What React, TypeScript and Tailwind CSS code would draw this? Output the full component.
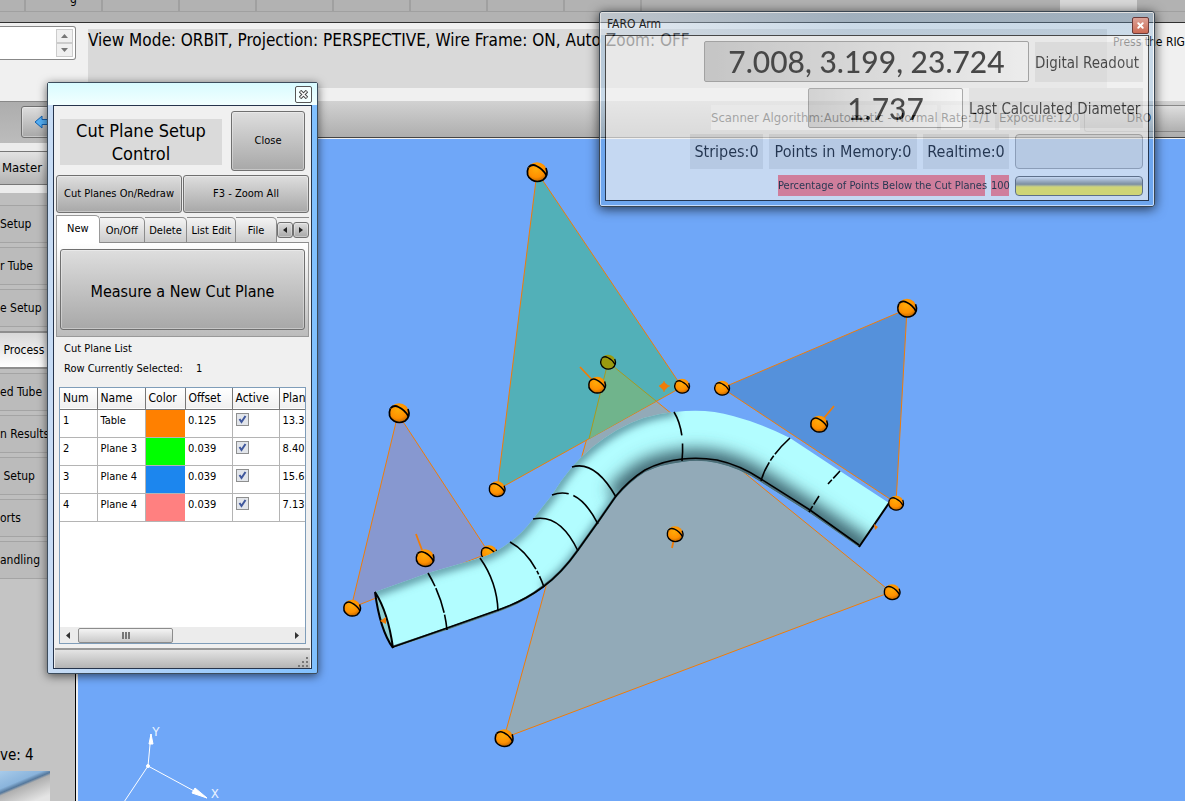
import React from 'react';
import { X } from 'lucide-react';

const BEVEL =
    'border border-[#707070] rounded-[3px] bg-gradient-to-b from-[#dedede] to-[#a8a8a8] shadow-[inset_0_0_0_1px_rgba(255,255,255,0.35)]';

const SIDE_ITEMS = ['Setup', 'r Tube', 'e Setup', ' Process', 'ed Tube', 'n Results', ' Setup', 'orts', 'andling'];

const PLANES = [
    { num: 1, name: 'Table', color: 'bg-[#ff8000]', offset: '0.125', plane: '13.3' },
    { num: 2, name: 'Plane 3', color: 'bg-[#00ff00]', offset: '0.039', plane: '8.40' },
    { num: 3, name: 'Plane 4', color: 'bg-[#1c86ee]', offset: '0.039', plane: '15.6' },
    { num: 4, name: 'Plane 4', color: 'bg-[#ff8080]', offset: '0.039', plane: '7.13' },
];

const TABS = [
    { label: 'On/Off', width: 'w-[45px]' },
    { label: 'Delete', width: 'w-[43px]' },
    { label: 'List Edit', width: 'w-[49px]' },
    { label: 'File', width: 'w-[41px]' },
];

const BALLS = [
    { x: 537, y: 172, r: 10 },
    { x: 399, y: 413, r: 10 },
    { x: 352, y: 608, r: 8.5 },
    { x: 425, y: 558, r: 9 },
    { x: 497, y: 489, r: 8 },
    { x: 597, y: 385, r: 8.5 },
    { x: 682, y: 386, r: 7.5 },
    { x: 722, y: 388, r: 7.5 },
    { x: 907, y: 308, r: 9.5 },
    { x: 819, y: 424, r: 8.5 },
    { x: 896, y: 503, r: 7.5 },
    { x: 892, y: 592, r: 8 },
    { x: 675, y: 534, r: 8 },
    { x: 504, y: 738, r: 9 },
];

const UPPER =
    'L428 573 L480 558 Q496 553 510 542 Q522 534 533 519 L552 495 Q561 480 572 467 Q590 446 617 430 Q645 414 675 412 Q706 408 733 416 Q763 424 790 438 L840 471 L889 503';
const LOWER =
    'L810 513 L761 482 Q740 468 717 463 Q699 459 682 462 Q662 464 645 472 Q629 482 616 498 L598 524 L578 552 Q562 575 543 588 Q524 603 498 612 L447 630 L393 648';

interface BallProps {
    x: number;
    y: number;
    r: number;
    fill?: string;
}

const Ball: React.FC<BallProps> = ({ x, y, r, fill = 'url(#ball)' }) => (
    <g transform={`translate(${x} ${y}) scale(${r / 10})`}>
        <ellipse rx="10" ry="9.8" fill={fill} />
        <path d="M-8.6 -4.6 Q-12 4 -5 8 Q0 11 6 8 Q12 3.5 9 -4" fill="none" stroke="#000" strokeWidth="1.7" />
        <path d="M-8.4 -4.8 Q-5 -8.4 -0.5 -6 Q6 -3 9.4 3.4" fill="none" stroke="#000" strokeWidth="1.8" />
    </g>
);

const Scene: React.FC = () => (
    <svg className="absolute inset-0 w-full h-full" viewBox="78 139 1107 662" preserveAspectRatio="xMinYMin slice">
        <defs>
            <radialGradient id="ball" cx="0.45" cy="0.35" r="0.7">
                <stop offset="0" stopColor="#ffab08" />
                <stop offset="0.6" stopColor="#ff9000" />
                <stop offset="1" stopColor="#b05c00" />
            </radialGradient>
            <clipPath id="tube">
                <path d={`M375 592 ${UPPER} L859 547 ${LOWER} Z`} />
            </clipPath>
            <filter id="soft" filterUnits="userSpaceOnUse" x="300" y="350" width="700" height="360">
                <feGaussianBlur stdDeviation="8" />
            </filter>
            <filter id="softer" filterUnits="userSpaceOnUse" x="300" y="350" width="700" height="360">
                <feGaussianBlur stdDeviation="4" />
            </filter>
        </defs>

        {/* Cut planes */}
        <g strokeWidth="1" stroke="#f07c08">
            <path d="M608 362 L891 592 L504 738 Z" fill="#92aab8" />
            <path d="M537 172 L497 490 L682 387 Z" fill="#52b0b8" />
            <path d="M722 388 L907 309 L896 503 Z" fill="#5591db" />
            <path d="M398 414 L351 608 L489 553 Z" fill="#8798d0" />
        </g>
        <path d="M608 362 L656 401 L589 439 Z" fill="#70b48c" />
        <path d="M656 401 L608 362 L589 439" fill="none" stroke="#a89a20" />
        <Ball x={608} y={362} r={7.5} fill="#9a9a10" />
        <Ball x={489} y={553} r={8} />

        {/* Tube body */}
        <g clipPath="url(#tube)">
            <rect x="350" y="390" width="560" height="280" fill="#b2fdff" />
            <path
                d="M370 594 L428 573 L480 558 Q496 553 510 542 Q522 534 533 519 L552 495 Q561 480 572 467 Q590 446 617 430 Q645 414 675 411"
                fill="none"
                stroke="#4d8492"
                strokeWidth="8"
                filter="url(#softer)"
            />
            <path
                d="M870 553 L810 513 L761 482 Q740 468 717 463 Q699 459 682 462 Q662 464 645 472 Q629 482 616 498"
                fill="none"
                stroke="#3c6570"
                strokeWidth="24"
                filter="url(#soft)"
            />
            <path d="M616 498 L598 524 L578 552 Q562 575 543 588" fill="none" stroke="#5d98a4" strokeWidth="8" filter="url(#softer)" />
            <path d={`M859 547 ${LOWER}`} fill="none" stroke="#4c6c76" strokeWidth="5" />
        </g>
        <g fill="none" stroke="#000" strokeWidth="1.6">
            <path d="M859 545 L810 510 L761 479 Q740 465 717 460 Q699 457 682 459 Q662 461 645 470 Q629 480 616 496 L598 522 L578 550 Q562 573 543 587 Q524 601 498 610 L447 628 L393 647" />
            <path d="M889 503 L859 547" strokeWidth="2" />
            <path d="M375 592 Q388 612 393 648 Q380 630 375 592 Z" fill="#8fd0d4" strokeWidth="2" />
            <path d="M428 573 Q444 600 447 630" strokeDasharray="15 2 26 2 40" />
            <path d="M480 558 Q497 582 498 611" />
            <path d="M510 542 Q532 554 544 587" strokeDasharray="38 2 4 2 40" />
            <path d="M533 519 Q560 513 578 551" />
            <path d="M552 495 Q578 485 598 524" strokeDasharray="17 5 60" />
            <path d="M572 467 Q595 460 616 497" />
            <path d="M674 412 Q685 430 682 461" strokeDasharray="25 8 40" />
            <path d="M790 438 Q767 459 761 481" strokeDasharray="22 2 6 2 30" />
            <path d="M840 471 L828 484 M819 496 L809 512" strokeDasharray="10 2" />
        </g>

        {/* Probe direction handles */}
        <path d="M416 534 L425 558 M580 367 L597 385 M834 406 L819 424 M672 548 L675 534" stroke="#f07c08" strokeWidth="1.8" />
        <path d="M664 382 L669 386 L664 391 L659 386 Z" fill="#f07c08" />
        <path d="M659 386 H670 M664 381 V392" stroke="#f07c08" />
        <path d="M380 621 L386 617 V624 Z M874 524 L878 527 L875 530 Z" fill="#f07c08" />
        {BALLS.map((ball) => (
            <Ball key={`${ball.x}-${ball.y}`} {...ball} />
        ))}

        {/* Axis triad */}
        <g stroke="#fff" fill="#fff">
            <path d="M148 766 L151 734 M148 766 L207 798 M148 766 L120 808" fill="none" />
            <path d="M151 734 L149 744 L153 744 Z M207 798 L192 793 L195 788 Z" />
            <circle cx="148" cy="766" r="1.5" />
        </g>
        <g fill="#e8f2ff" fontFamily="Liberation Mono, monospace" fontSize="13">
            <text x="152" y="736">Y</text>
            <text x="211" y="798">X</text>
        </g>
    </svg>
);

const Sidebar: React.FC = () => (
    <aside className="w-[78px] shrink-0 flex flex-col overflow-hidden bg-[#c4c4c4] border-r-2 border-[#f0f0f0]">
        <div className="flex-1 flex flex-col border-r border-black">
            <div className="h-[42px] border-t border-[#888] bg-gradient-to-b from-[#adadad] to-[#bcbcbc] pl-[21px] pt-1">
                <button className={`${BEVEL} w-[60px] h-[32px] pl-3 flex items-center`} aria-label="Back">
                    <svg width="16" height="14" viewBox="0 0 16 14">
                        <path d="M1 7 L8 1 V4.5 H16 V9.5 H8 V13 Z" fill="#55b0f5" stroke="#1260b0" />
                    </svg>
                </button>
            </div>
            <div className="py-2 bg-[#ececec]">
                <button className="block w-full h-[34px] pl-[2px] text-left text-[13px] border-y border-[#777] bg-gradient-to-b from-[#e2e2e2] to-[#b4b4b4]">
                    Master
                </button>
            </div>
            <nav className="flex flex-col gap-[4px] pt-[12px] bg-[#bebebe]">
                {SIDE_ITEMS.map((item, i) => (
                    <button
                        key={i}
                        className={
                            item === ' Process'
                                ? 'h-[38px] text-left text-[12px] whitespace-pre border-y-2 border-[#8e8e8e] bg-gradient-to-b from-[#d8d8d8] to-white'
                                : 'h-[38px] text-left text-[12px] whitespace-pre border-y border-[#a4a4a4] bg-[#bbbbbb]'
                        }
                    >
                        {item}
                    </button>
                ))}
            </nav>
            <div className="mt-auto">
                <p className="text-[15px] leading-[24px]">ve: 4</p>
                <svg className="block mt-1" width="50" height="30" viewBox="0 0 50 30">
                    <defs>
                        <linearGradient id="thumb" x1="0" y1="0" x2="0.7" y2="1">
                            <stop offset="0" stopColor="#a8cbea" />
                            <stop offset="0.4" stopColor="#8ab4dc" />
                            <stop offset="0.5" stopColor="#55789c" />
                            <stop offset="0.56" stopColor="#b0b0b0" />
                            <stop offset="1" stopColor="#e4e4e4" />
                        </linearGradient>
                    </defs>
                    <rect width="50" height="30" fill="url(#thumb)" />
                </svg>
            </div>
        </div>
    </aside>
);

const CutPlaneDialog: React.FC = () => (
    <section className="absolute left-[47px] top-[82px] w-[271px] border border-[#3c4c5c] rounded-[2px] bg-gradient-to-r from-[#c8dcf4] to-[#80c0ff] shadow-[0_2px_10px_rgba(0,0,0,0.6)]">
        <div className="h-[22px] pr-[5px] flex items-center justify-end bg-gradient-to-b from-[#d8fbff] to-[#f2ffff]">
            <button
                aria-label="Close window"
                className="w-[17px] h-[17px] flex items-center justify-center rounded-[2px] border border-[#555] bg-[#f4ffff]"
            >
                <svg width="9" height="9" viewBox="0 0 9 9">
                    <path d="M1 1 L8 8 M8 1 L1 8" stroke="#444" strokeWidth="3.4" />
                    <path d="M1.5 1.5 L7.5 7.5 M7.5 1.5 L1.5 7.5" stroke="#fff" strokeWidth="1.5" />
                </svg>
            </button>
        </div>
        <div className="mx-[5px] mb-[4px] border border-[#26344c] bg-[#f0f0f0] text-[11px]">
            <div className="flex justify-between pl-[6px] pr-[6px] pt-[5px]">
                <h1 className="w-[162px] h-[46px] mt-2 text-center text-[18px] leading-[23px] bg-[#dadada]">
                    Cut Plane Setup Control
                </h1>
                <button className={`${BEVEL} w-[74px] h-[60px]`}>Close</button>
            </div>
            <div className="flex gap-px px-[2px] pt-1">
                <button className={`${BEVEL} flex-1 h-[38px]`}>Cut Planes On/Redraw</button>
                <button className={`${BEVEL} flex-1 h-[38px]`}>F3 - Zoom All</button>
            </div>

            {/* Tab strip */}
            <div className="flex items-end px-[2px] pt-[2px] h-[30px]">
                <button className="w-[44px] h-[28px] bg-white border-l border-t border-r border-[#999] rounded-tr-[5px]">New</button>
                {TABS.map((tab) => (
                    <button
                        key={tab.label}
                        className={`${tab.width} h-[26px] pt-[2px] whitespace-nowrap border-t border-r border-b border-[#8c8c8c] rounded-tr-[5px] bg-gradient-to-b from-[#f4f4f4] to-[#cccccc]`}
                    >
                        {tab.label}
                    </button>
                ))}
                <div className="flex-1 h-[26px] flex items-center border-t border-b border-[#8c8c8c]">
                    <button aria-label="Previous tab" className={`${BEVEL} w-4 h-4 shrink-0 flex items-center justify-center`}>
                        <svg width="4" height="6" viewBox="0 0 4 6">
                            <path d="M4 0 L0 3 L4 6 Z" fill="#222" />
                        </svg>
                    </button>
                    <button aria-label="Next tab" className={`${BEVEL} w-4 h-4 shrink-0 flex items-center justify-center`}>
                        <svg width="4" height="6" viewBox="0 0 4 6">
                            <path d="M0 0 L4 3 L0 6 Z" fill="#222" />
                        </svg>
                    </button>
                </div>
            </div>
            <div className="mx-[2px] px-[3px] py-[6px] border-x border-b border-[#999] bg-gradient-to-b from-white to-[#bcbcbc]">
                <button className={`${BEVEL} block w-full h-[81px] pt-1 text-[16px]`}>Measure a New Cut Plane</button>
            </div>

            <p className="pl-[10px] mt-[2px] leading-[20px]">Cut Plane List</p>
            <p className="pl-[10px] leading-[20px]">
                Row Currently Selected: <span className="ml-[10px]">1</span>
            </p>

            <div className="mx-[5px] mt-[8px] h-[257px] flex flex-col overflow-hidden border border-[#7f9db9] bg-white">
                <table className="w-[260px] table-fixed border-collapse">
                    <thead>
                        <tr className="h-[21px] text-[12px] leading-[20px] text-left bg-gradient-to-b from-white to-[#f0f0f0] border-b border-[#777]">
                            <th className="w-[37px] pl-[3px] font-normal border-r border-[#777]">Num</th>
                            <th className="w-[48px] pl-[3px] font-normal border-r border-[#777]">Name</th>
                            <th className="w-[40px] pl-[3px] font-normal border-r border-[#777]">Color</th>
                            <th className="w-[47px] pl-[3px] font-normal border-r border-[#777]">Offset</th>
                            <th className="w-[47px] pl-[3px] font-normal border-r border-[#777]">Active</th>
                            <th className="pl-[3px] font-normal">Plan</th>
                        </tr>
                    </thead>
                    <tbody>
                        {PLANES.map((plane) => (
                            <tr key={plane.num} className="h-[28px] align-top leading-[22px] border-b border-[#b4b4b4]">
                                <td className="pl-[3px] border-r border-[#b4b4b4]">{plane.num}</td>
                                <td className="pl-[3px] border-r border-[#b4b4b4] whitespace-nowrap">{plane.name}</td>
                                <td className={plane.color} />
                                <td className="pl-[3px] border-r border-[#b4b4b4]">{plane.offset}</td>
                                <td className="pl-[3px] pt-[3px] border-r border-[#b4b4b4]">
                                    <span className="grid w-[13px] h-[13px]">
                                        <input
                                            type="checkbox"
                                            defaultChecked
                                            aria-label={`Active ${plane.num}`}
                                            className="appearance-none col-start-1 row-start-1 w-[13px] h-[13px] border border-[#8e8f8f] bg-[#e2e5ea]"
                                        />
                                        <svg className="col-start-1 row-start-1 pointer-events-none" width="13" height="13" viewBox="0 0 13 13">
                                            <path d="M3.5 6 L5.5 9 L9.5 3" fill="none" stroke="#3f579c" strokeWidth="2" />
                                        </svg>
                                    </span>
                                </td>
                                <td className="pl-[3px]">{plane.plane}</td>
                            </tr>
                        ))}
                    </tbody>
                </table>
                <div className="mt-auto h-[16px] px-[6px] flex items-center bg-[#ececec]">
                    <svg width="5" height="7" viewBox="0 0 5 7">
                        <path d="M4 0 L0 3.5 L4 7 Z" fill="#333" />
                    </svg>
                    <div className="ml-[7px] w-[95px] h-[15px] flex items-center justify-center gap-px border border-[#8c8c8c] rounded-[2px] bg-gradient-to-b from-[#f4f4f4] to-[#cacaca]">
                        <span className="w-[2px] h-[7px] bg-[#777]" />
                        <span className="w-[2px] h-[7px] bg-[#777]" />
                        <span className="w-[2px] h-[7px] bg-[#777]" />
                    </div>
                    <svg className="ml-auto" width="5" height="7" viewBox="0 0 5 7">
                        <path d="M1 0 L5 3.5 L1 7 Z" fill="#333" />
                    </svg>
                </div>
            </div>
            <div className="mt-[4px] mx-px h-[20px] flex items-end justify-end border-t-2 border-[#999] bg-gradient-to-b from-[#e4e4e4] to-[#b4b4b4]">
                <svg width="12" height="12" viewBox="0 0 12 12" fill="#777">
                    <path d="M8 1h2v2h-2z M8 5h2v2h-2z M8 9h2v2h-2z M4 5h2v2h-2z M4 9h2v2h-2z M0 9h2v2h-2z" />
                </svg>
            </div>
        </div>
    </section>
);

const ArmWindow: React.FC = () => (
    <section className="absolute right-[30px] top-[11px] w-[556px] border border-[#3a4652] rounded-[3px] shadow-[0_2px_12px_rgba(0,0,0,0.7)]">
        <div className="border border-white/60 rounded-[2px]">
            <div className="h-[22px] pl-[6px] pr-[4px] flex items-center justify-between bg-gradient-to-r from-[rgba(205,220,235,0.45)] to-[rgba(120,170,215,0.3)] to-45%">
                <h2 className="text-[12px] text-[#222]">FARO Arm</h2>
                <button
                    aria-label="Close FARO Arm"
                    className="w-[17px] h-[17px] mt-[2px] flex items-center justify-center rounded-[2px] border border-[#6b3a38] bg-gradient-to-b from-[#dca298] to-[#cc6a54]"
                >
                    <X size={9} strokeWidth={5} color="#fff" />
                </button>
            </div>
            <div className="border-x-4 border-b-4 border-[rgba(110,165,215,0.3)]">
                <div className="px-[5px] pt-[5px] pb-[4px] flex flex-col gap-[6px] border border-black bg-[#f0f0f0] opacity-[0.67]">
                    <div className="flex justify-end items-center gap-[6px]">
                        <input
                            id="readout"
                            readOnly
                            value="7.008, 3.199, 23.724"
                            className="w-[325px] h-[41px] text-center text-[30px] font-medium font-[Lato,sans-serif] border border-[#888] rounded-[2px] bg-gradient-to-r from-[#bcbcbc] to-[#f6f6f6]"
                        />
                        <label htmlFor="readout" className="w-[108px] h-[40px] leading-[43px] text-[15px] whitespace-nowrap bg-[#dcdcdc]">
                            Digital Readout
                        </label>
                    </div>
                    <div className="flex justify-end items-center gap-[6px]">
                        <input
                            id="diameter"
                            readOnly
                            value="1.737"
                            className="w-[155px] h-[40px] text-center text-[30px] font-medium font-[Lato,sans-serif] border border-[#888] rounded-[2px] bg-gradient-to-r from-[#c4c4c4] to-[#fafafa]"
                        />
                        <label htmlFor="diameter" className="w-[174px] h-[40px] leading-[43px] text-[15px] whitespace-nowrap bg-[#dcdcdc]">
                            Last Calculated Diameter
                        </label>
                    </div>
                    <div className="flex justify-end items-center gap-[6px] text-[16px] text-center leading-[35px] whitespace-nowrap">
                        <span className="w-[73px] bg-[#dadada]">Stripes:0</span>
                        <span className="w-[148px] bg-[#dadada]">Points in Memory:0</span>
                        <span className="w-[86px] bg-[#dadada]">Realtime:0</span>
                        <button aria-label="Scan" className="w-[128px] h-[35px] border border-[#999] rounded-[4px] bg-[#dadada]" />
                    </div>
                    <div className="flex justify-end items-center gap-[6px] text-[11px] text-center leading-[21px] whitespace-nowrap">
                        <span className="w-[207px] bg-[#ff6a70]">Percentage of Points Below the Cut Planes</span>
                        <span className="w-[18px] bg-[#ff6a70]">100</span>
                        <div
                            role="progressbar"
                            aria-label="Points below cut planes"
                            className="w-[128px] h-[20px] border border-[#555] rounded-[4px] bg-gradient-to-b from-[#f0f0f0] from-0% via-[#848478] via-40% to-[#ffec38] to-55%"
                        />
                    </div>
                </div>
            </div>
        </div>
    </section>
);

export default function App() {
    return (
        <div className="relative min-h-screen flex flex-col overflow-hidden bg-[#f0f0f0] text-black font-['DejaVu_Sans_Condensed','Noto_Sans',sans-serif]">
            {/* Ribbon bottom edge */}
            <header className="h-[23px] flex items-start border-b border-[#303030] bg-[#b2b2b2]">
                <div className="w-[26px] h-[12px] shrink-0 border-r-2 border-b border-[#a0a0a0]" />
                <div className="w-[77px] h-[12px] shrink-0 flex items-end justify-center overflow-hidden border-r-2 border-b border-[#a0a0a0]">
                    <span className="pl-5 text-[12px] leading-[24px]">g</span>
                </div>
                {[1, 2, 3, 4, 5, 6, 7].map((n) => (
                    <div key={n} className="w-[77px] h-[12px] shrink-0 border-r-2 border-b border-[#a0a0a0]" />
                ))}
                <div className="flex-1 h-[12px] border-b border-[#a0a0a0]" />
                <div className="w-[77px] h-[12px] shrink-0 bg-[#d8d8d8]" />
                <div className="w-[48px] h-[12px] shrink-0 border-b border-[#a0a0a0]" />
            </header>

            <div className="h-[78px] flex items-start">
                <div className="w-[76px] h-[34px] mt-[3px] shrink-0 flex justify-end p-[2px] pl-0 border border-l-0 border-[#888] rounded-r-[3px] bg-white">
                    <div className="w-[17px] flex flex-col">
                        <button aria-label="Scroll up" className="flex-1 flex items-center justify-center border border-[#ccc] bg-[#f0f0f0]">
                            <svg width="7" height="4" viewBox="0 0 7 4">
                                <path d="M0 4 L3.5 0 L7 4 Z" fill="#777" />
                            </svg>
                        </button>
                        <button aria-label="Scroll down" className="flex-1 flex items-center justify-center border border-[#ccc] bg-[#f0f0f0]">
                            <svg width="7" height="4" viewBox="0 0 7 4">
                                <path d="M0 0 L3.5 4 L7 0 Z" fill="#777" />
                            </svg>
                        </button>
                    </div>
                </div>
                <p className="ml-3 mt-[6px] flex-1 h-[59px] text-[17px] leading-[23px] whitespace-nowrap bg-[#d9d9d9]">
                    View Mode: ORBIT, Projection: PERSPECTIVE, Wire Frame: ON, Auto Zoom: OFF
                </p>
                <p className="w-[72px] ml-[6px] mt-[9px] shrink-0 whitespace-nowrap text-[12px] leading-[20px]">
                    Press the RIG
                </p>
            </div>

            <div className="flex-1 flex">
                <Sidebar />
                <div className="flex-1 flex flex-col">
                    <div className="h-[37px] flex justify-end items-start gap-1 pt-1 border-b border-[#444] bg-gradient-to-b from-[#d2d2d2] to-[#aeaeae] text-[13px] leading-[25px] whitespace-nowrap">
                        <span className="w-[226px] bg-[#dcdcdc]">Scanner Algorithm:Automatic - Normal</span>
                        <span className="w-[54px] bg-[#dcdcdc]">Rate:1/1</span>
                        <span className="w-[81px] bg-[#dcdcdc]">Exposure:120</span>
                        <button className="w-[101px] h-[27px] pl-2 border border-r-0 border-[#888] rounded-l-[3px] bg-gradient-to-b from-[#dedede] to-[#b0b0b0] text-[12px]">
                            DRO
                        </button>
                    </div>
                    <main className="relative flex-1 border-t border-[#f0f0f0] bg-[#6fa7f8]">
                        <Scene />
                    </main>
                </div>
            </div>

            <CutPlaneDialog />
            <ArmWindow />
        </div>
    );
}
